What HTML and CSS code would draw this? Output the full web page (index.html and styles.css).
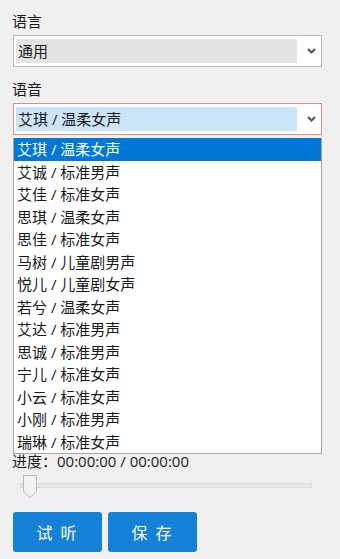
FILE: index.html
```html
<!DOCTYPE html>
<html lang="zh-CN">
<head>
  <meta charset="UTF-8" />
  <meta name="viewport" content="width=device-width, initial-scale=1.0"/>
  <title>语音设置</title>
  <link rel="stylesheet" href="styles.css">
</head>
<body>

  <div class="field-label">语言</div>
  <div class="combo">
    <span class="combo-value">通用</span>
    <span class="combo-arrow">
      <svg width="9" height="6" viewBox="0 0 9 6"><path d="M1 1 L4.5 4.5 L8 1" fill="none" stroke="#555" stroke-width="2"/></svg>
    </span>
  </div>

  <div class="field-label spaced">语音</div>
  <div class="combo-wrap">
    <div class="combo focused">
      <span class="combo-value">艾琪 / 温柔女声</span>
      <span class="combo-arrow">
        <svg width="9" height="6" viewBox="0 0 9 6"><path d="M1 1 L4.5 4.5 L8 1" fill="none" stroke="#555" stroke-width="2"/></svg>
      </span>
    </div>
    <ul class="dropdown" id="voice-list"></ul>
  </div>

  <!-- the open list covers this part of the form -->
  <div class="covered"></div>

  <div class="progress-label">进度：00:00:00 / 00:00:00</div>
  <div class="slider">
    <div class="track"></div>
    <svg class="thumb" width="14" height="24" viewBox="0 0 14 24">
      <path d="M0.5 0.5 H13.5 V16 L7 23 L0.5 16 Z" fill="#f3f3f3" stroke="#b9b9b9"/>
    </svg>
  </div>

  <div class="actions">
    <button>试 听</button>
    <button>保 存</button>
  </div>

  <script>
    const voices = [
      "艾琪 / 温柔女声", "艾诚 / 标准男声", "艾佳 / 标准女声", "思琪 / 温柔女声",
      "思佳 / 标准女声", "马树 / 儿童剧男声", "悦儿 / 儿童剧女声", "若兮 / 温柔女声",
      "艾达 / 标准男声", "思诚 / 标准男声", "宁儿 / 标准女声", "小云 / 标准女声",
      "小刚 / 标准男声", "瑞琳 / 标准女声"
    ];
    const list = document.getElementById('voice-list');
    voices.forEach(function (name, i) {
      const li = document.createElement('li');
      li.textContent = name;
      if (i === 0) li.className = 'selected';
      list.appendChild(li);
    });
  </script>
</body>
</html>
```

FILE: styles.css
```css
body {
  margin: 0;
  padding: 11px 0 0 12px;
  background-color: #f0f0f0;
  font-family: "Open Sans", "Noto Sans CJK SC", sans-serif;
  font-size: 15px;
  color: #1a1a1a;
}

.field-label {
  line-height: 21px;
  height: 21px;
}

.field-label.spaced {
  margin-top: 12px;
}

.combo {
  display: flex;
  align-items: center;
  width: 309px;
  height: 32px;
  box-sizing: border-box;
  margin: 3px 0 0 1px;
  padding: 3px 0 3px 2px;
  background-color: #fff;
  border: 1px solid #b8b8b8;
}

.combo-value {
  width: 279px;
  height: 24px;
  line-height: 24px;
  padding-left: 2px;
  background-color: #e4e4e4;
  white-space: nowrap;
}

.combo-arrow {
  flex: 1;
  display: flex;
  justify-content: center;
  padding-left: 4px;
}

.combo-wrap {
  position: relative;
}

.combo.focused {
  border-color: #e58a8c;
}

.combo.focused .combo-value {
  background-color: #cce4f7;
}

.dropdown {
  position: absolute;
  top: 35px;
  left: 1px;
  z-index: 2;
  width: 309px;
  box-sizing: border-box;
  margin: 0;
  padding: 0;
  list-style: none;
  background-color: #fff;
  border: 1px solid #a6a6a6;
  border-top: none;
}

.dropdown li {
  height: 22.5px;
  line-height: 22.5px;
  padding-left: 3px;
  white-space: nowrap;
}

.dropdown li.selected {
  background-color: #0078d7;
  color: #fff;
}

.covered {
  height: 316px;
}

.progress-label {
  line-height: 21px;
  height: 21px;
}

.slider {
  position: relative;
  width: 292px;
  height: 30px;
  margin-left: 8px;
}

.track {
  position: absolute;
  top: 11px;
  left: 0;
  right: 0;
  height: 5px;
  box-sizing: border-box;
  background-color: #e7e7e7;
  border: 1px solid #dadada;
}

.thumb {
  position: absolute;
  top: 3px;
  left: 3px;
}

.actions {
  display: flex;
  gap: 6px;
  margin: 10px 0 0 1px;
}

button {
  width: 89px;
  height: 40px;
  padding: 0;
  border: none;
  border-radius: 3px;
  background-color: #1581d7;
  color: #fff;
  font-family: "Open Sans", "Noto Sans CJK SC", sans-serif;
  font-size: 16px;
  letter-spacing: 2px;
  cursor: pointer;
}
```
